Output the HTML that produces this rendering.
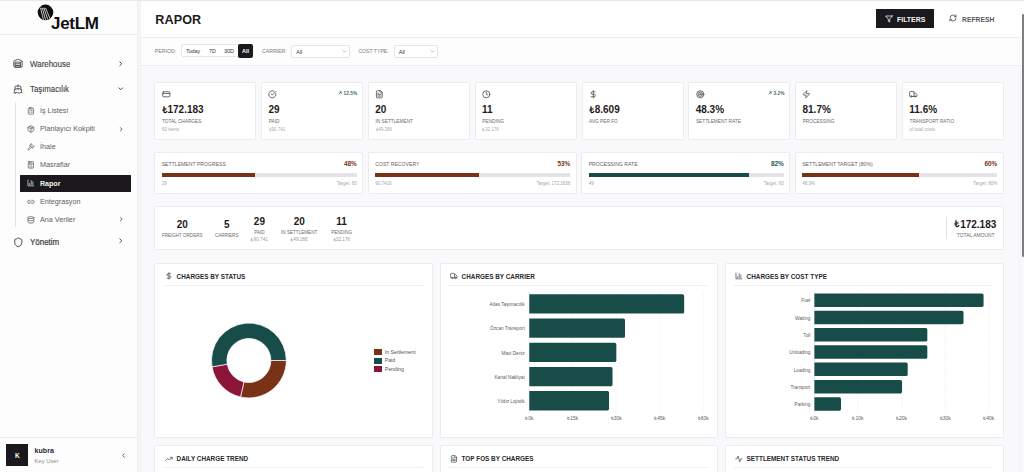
<!DOCTYPE html>
<html><head><meta charset="utf-8"><title>Rapor</title>
<style>
html,body{margin:0;padding:0;}
body{width:1024px;height:472px;overflow:hidden;position:relative;background:#f9f8fb;font-family:"Liberation Sans",sans-serif;}
.t{position:absolute;line-height:1;white-space:nowrap;}
.r{position:absolute;box-sizing:border-box;}
.i{position:absolute;overflow:visible;}
</style></head><body>
<div class="r" style="left:137.00px;top:0.00px;width:887.00px;height:37.00px;background:#ffffff;"></div>
<div class="r" style="left:137.00px;top:38.00px;width:884.00px;height:27.00px;background:#fefdfe;"></div>
<div class="r" style="left:137.00px;top:37.00px;width:884.00px;height:1.00px;background:#ecebef;"></div>
<div class="r" style="left:137.00px;top:65.00px;width:884.00px;height:1.00px;background:#ecebef;"></div>
<div class="r" style="left:0.00px;top:0.00px;width:137.50px;height:472.00px;background:#fdfdfd;"></div>
<div class="r" style="left:137.00px;top:0.00px;width:1.00px;height:472.00px;background:#efeef1;"></div>
<div class="r" style="left:138.00px;top:0.00px;width:2.50px;height:472.00px;background:#f4f3f6;"></div>
<div class="r" style="left:0.00px;top:34.20px;width:137.50px;height:1.00px;background:#ecebee;"></div>
<div class="r" style="left:0.00px;top:436.50px;width:137.50px;height:1.00px;background:#ecebee;"></div>
<div class="r" style="left:0.00px;top:0.00px;width:1024.00px;height:1.00px;background:#e9e9e7;"></div>
<div class="r" style="left:1020.00px;top:65.00px;width:1.00px;height:407.00px;background:#f3f2f5;"></div>
<div class="r" style="left:1022.30px;top:13.50px;width:2.20px;height:243.50px;background:#7e7e80;border-radius:1.2px;"></div>
<svg class="i" style="left:0;top:0;width:137px;height:34px" viewBox="0 0 137 34"><circle cx="45.5" cy="12.4" r="7.8" fill="#0d0d0d"/><path d="M52.2 16.4 L49.6 20.6 L55 21 Z" fill="#fdfdfd"/><path d="M40.6 8.3 L43.4 19.6 M42.4 8.3 L45.6 19.9 M44.1 8.4 L47.8 19.6 M45.8 8.6 L50 18.7" stroke="#fdfdfd" stroke-width="0.75"/><path d="M40.2 8.2 L46.2 8.4" stroke="#fdfdfd" stroke-width="0.6"/></svg>
<div class="t" style="top:14.51px;font-size:17.0px;font-weight:700;color:#111111;left:51.00px;letter-spacing:-0.3px;">JetLM</div>
<svg class="i" style="left:13.00px;top:58.00px;width:10.00px;height:10.00px" viewBox="0 0 24 24" fill="none" stroke="#4a4a4d" stroke-width="2.2" stroke-linecap="round" stroke-linejoin="round"><path d="M22 8.35V20a2 2 0 0 1-2 2H4a2 2 0 0 1-2-2V8.35A2 2 0 0 1 3.26 6.5l8-3.2a2 2 0 0 1 1.48 0l8 3.2A2 2 0 0 1 22 8.35Z"/><path d="M6 18h12"/><path d="M6 14h12"/><rect width="12" height="12" x="6" y="10"/></svg>
<div class="t" style="top:60.10px;font-size:8.5px;font-weight:400;color:#3e3e40;left:30.40px;transform-origin:0 0;transform:scaleX(0.935);-webkit-text-stroke:0.12px #3e3e40;">Warehouse</div>
<svg class="i" style="left:116.50px;top:59.50px;width:7.50px;height:7.50px" viewBox="0 0 24 24" fill="none" stroke="#474749" stroke-width="3.2" stroke-linecap="round" stroke-linejoin="round"><path d="m9 18 6-6-6-6"/></svg>
<svg class="i" style="left:13.00px;top:83.80px;width:10.00px;height:10.00px" viewBox="0 0 24 24" fill="none" stroke="#4a4a4d" stroke-width="2.2" stroke-linecap="round" stroke-linejoin="round"><path d="M12 10.189V14"/><path d="M12 2v3"/><path d="M19 13V7a2 2 0 0 0-2-2H7a2 2 0 0 0-2 2v6"/><path d="M19.38 20A11.6 11.6 0 0 0 21 14l-8.188-3.639a2 2 0 0 0-1.624 0L3 14a11.6 11.6 0 0 0 2.81 7.76"/><path d="M2 21c.6.5 1.2 1 2.5 1 2.5 0 2.5-2 5-2 1.3 0 1.9.5 2.5 1s1.2 1 2.5 1c2.5 0 2.5-2 5-2 1.3 0 1.9.5 2.5 1"/></svg>
<div class="t" style="top:85.17px;font-size:8.3px;font-weight:400;color:#3e3e40;left:30.40px;transform-origin:0 0;transform:scaleX(0.94);-webkit-text-stroke:0.12px #3e3e40;">Taşımacılık</div>
<svg class="i" style="left:116.50px;top:84.50px;width:7.50px;height:7.50px" viewBox="0 0 24 24" fill="none" stroke="#474749" stroke-width="3.2" stroke-linecap="round" stroke-linejoin="round"><path d="m6 9 6 6 6-6"/></svg>
<div class="r" style="left:15.00px;top:102.00px;width:1.00px;height:125.40px;background:#e3e2e6;"></div>
<svg class="i" style="left:27.30px;top:106.70px;width:7.80px;height:7.80px" viewBox="0 0 24 24" fill="none" stroke="#5a5a5d" stroke-width="2.2" stroke-linecap="round" stroke-linejoin="round"><rect width="8" height="4" x="8" y="2" rx="1" ry="1"/><path d="M16 4h2a2 2 0 0 1 2 2v14a2 2 0 0 1-2 2H6a2 2 0 0 1-2-2V6a2 2 0 0 1 2-2h2"/><path d="M12 11h4"/><path d="M12 16h4"/><path d="M8 11h.01"/><path d="M8 16h.01"/></svg>
<div class="t" style="top:107.37px;font-size:7.6px;font-weight:400;color:#5d5d60;left:39.50px;transform-origin:0 0;transform:scaleX(0.95);">İş Listesi</div>
<svg class="i" style="left:27.30px;top:124.70px;width:7.80px;height:7.80px" viewBox="0 0 24 24" fill="none" stroke="#5a5a5d" stroke-width="2.2" stroke-linecap="round" stroke-linejoin="round"><path d="M11 21.73a2 2 0 0 0 2 0l7-4A2 2 0 0 0 21 16V8a2 2 0 0 0-1-1.73l-7-4a2 2 0 0 0-2 0l-7 4A2 2 0 0 0 3 8v8a2 2 0 0 0 1 1.73z"/><path d="M12 22V12"/><path d="m3.3 7 7.703 4.734a2 2 0 0 0 1.994 0L20.7 7"/><path d="m7.5 4.27 9 5.15"/></svg>
<div class="t" style="top:125.37px;font-size:7.6px;font-weight:400;color:#5d5d60;left:39.50px;transform-origin:0 0;transform:scaleX(0.95);">Planlayıcı Kokpiti</div>
<svg class="i" style="left:117.80px;top:125.50px;width:6.50px;height:6.50px" viewBox="0 0 24 24" fill="none" stroke="#474749" stroke-width="3.2" stroke-linecap="round" stroke-linejoin="round"><path d="m9 18 6-6-6-6"/></svg>
<svg class="i" style="left:27.30px;top:142.70px;width:7.80px;height:7.80px" viewBox="0 0 24 24" fill="none" stroke="#5a5a5d" stroke-width="2.2" stroke-linecap="round" stroke-linejoin="round"><path d="m14.5 12.5-8 8a2.119 2.119 0 1 1-3-3l8-8"/><path d="m16 16 6-6"/><path d="m8 8 6-6"/><path d="m9 7 8 8"/><path d="m21 11-8-8"/></svg>
<div class="t" style="top:143.37px;font-size:7.6px;font-weight:400;color:#5d5d60;left:39.50px;transform-origin:0 0;transform:scaleX(0.95);">İhale</div>
<svg class="i" style="left:27.30px;top:160.80px;width:7.80px;height:7.80px" viewBox="0 0 24 24" fill="none" stroke="#5a5a5d" stroke-width="2.2" stroke-linecap="round" stroke-linejoin="round"><rect width="16" height="20" x="4" y="2" rx="2"/><rect width="8" height="6" x="8" y="6" rx="1"/><path d="M8 18h8"/></svg>
<div class="t" style="top:161.47px;font-size:7.6px;font-weight:400;color:#5d5d60;left:39.50px;transform-origin:0 0;transform:scaleX(0.95);">Masraflar</div>
<div class="r" style="left:20.00px;top:175.00px;width:111.00px;height:16.80px;background:#1b191d;border-radius:0.6px;"></div>
<svg class="i" style="left:27.20px;top:179.10px;width:7.80px;height:7.80px" viewBox="0 0 24 24" fill="none" stroke="#e8e8e8" stroke-width="2.2" stroke-linecap="round" stroke-linejoin="round"><path d="M3 3v18h18"/><path d="M18 17V9"/><path d="M13 17V5"/><path d="M8 17v-3"/></svg>
<div class="t" style="top:180.07px;font-size:7.6px;font-weight:700;color:#f4f4f4;left:39.80px;transform-origin:0 0;transform:scaleX(0.93);">Rapor</div>
<svg class="i" style="left:27.30px;top:197.50px;width:7.80px;height:7.80px" viewBox="0 0 24 24" fill="none" stroke="#5a5a5d" stroke-width="2.2" stroke-linecap="round" stroke-linejoin="round"><path d="M9 17H7A5 5 0 0 1 7 7h2"/><path d="M15 7h2a5 5 0 1 1 0 10h-2"/><line x1="8" x2="16" y1="12" y2="12"/></svg>
<div class="t" style="top:198.17px;font-size:7.6px;font-weight:400;color:#5d5d60;left:39.50px;transform-origin:0 0;transform:scaleX(0.95);">Entegrasyon</div>
<svg class="i" style="left:27.30px;top:215.60px;width:7.80px;height:7.80px" viewBox="0 0 24 24" fill="none" stroke="#5a5a5d" stroke-width="2.2" stroke-linecap="round" stroke-linejoin="round"><ellipse cx="12" cy="5" rx="9" ry="3"/><path d="M3 5V19A9 3 0 0 0 21 19V5"/><path d="M3 12A9 3 0 0 0 21 12"/></svg>
<div class="t" style="top:216.27px;font-size:7.6px;font-weight:400;color:#5d5d60;left:39.50px;transform-origin:0 0;transform:scaleX(0.95);">Ana Veriler</div>
<svg class="i" style="left:117.80px;top:216.40px;width:6.50px;height:6.50px" viewBox="0 0 24 24" fill="none" stroke="#474749" stroke-width="3.2" stroke-linecap="round" stroke-linejoin="round"><path d="m9 18 6-6-6-6"/></svg>
<svg class="i" style="left:12.80px;top:236.60px;width:10.60px;height:10.60px" viewBox="0 0 24 24" fill="none" stroke="#4a4a4d" stroke-width="2.2" stroke-linecap="round" stroke-linejoin="round"><path d="M20 13c0 5-3.5 7.5-7.66 8.95a1 1 0 0 1-.67-.01C7.5 20.5 4 18 4 13V6a1 1 0 0 1 1-1c2 0 4.5-1.2 6.24-2.72a1.17 1.17 0 0 1 1.52 0C14.51 3.81 17 5 19 5a1 1 0 0 1 1 1z"/></svg>
<div class="t" style="top:238.30px;font-size:8.5px;font-weight:400;color:#38383a;left:30.20px;transform-origin:0 0;transform:scaleX(0.935);-webkit-text-stroke:0.2px #38383a;">Yönetim</div>
<svg class="i" style="left:116.50px;top:237.30px;width:7.50px;height:7.50px" viewBox="0 0 24 24" fill="none" stroke="#474749" stroke-width="3.2" stroke-linecap="round" stroke-linejoin="round"><path d="m9 18 6-6-6-6"/></svg>
<div class="r" style="left:6.20px;top:444.00px;width:22.00px;height:21.50px;background:#1b191d;"></div>
<div class="t" style="top:452.80px;font-size:6.5px;font-weight:700;color:#ffffff;left:17.40px;transform-origin:0 0;transform:translateX(-50%) ;">K</div>
<div class="t" style="top:448.29px;font-size:7.1px;font-weight:700;color:#2a2a2c;left:34.60px;">kubra</div>
<div class="t" style="top:458.89px;font-size:5.8px;font-weight:400;color:#8a8a8d;left:34.60px;">Key User</div>
<svg class="i" style="left:120.20px;top:451.50px;width:7.00px;height:7.00px" viewBox="0 0 24 24" fill="none" stroke="#58585a" stroke-width="3.2" stroke-linecap="round" stroke-linejoin="round"><path d="m15 18-6-6 6-6"/></svg>
<div class="t" style="top:13.53px;font-size:12.6px;font-weight:700;color:#1d1b20;left:155.30px;letter-spacing:0.1px;">RAPOR</div>
<div class="r" style="left:876.20px;top:9.10px;width:57.50px;height:19.00px;background:#1b191d;"></div>
<svg class="i" style="left:885.00px;top:14.50px;width:8.00px;height:8.00px" viewBox="0 0 24 24" fill="none" stroke="#ffffff" stroke-width="2.3" stroke-linecap="round" stroke-linejoin="round"><polygon points="22 3 2 3 10 12.46 10 19 14 21 14 12.46 22 3"/></svg>
<div class="t" style="top:15.67px;font-size:7.6px;font-weight:700;color:#f6f6f6;left:896.50px;transform-origin:0 0;transform:scaleX(0.91);">FILTERS</div>
<svg class="i" style="left:949.00px;top:13.60px;width:8.00px;height:8.00px" viewBox="0 0 24 24" fill="none" stroke="#5a5a5d" stroke-width="2.7" stroke-linecap="round" stroke-linejoin="round"><path d="M3 12a9 9 0 0 1 9-9 9.75 9.75 0 0 1 6.74 2.74L21 8"/><path d="M21 3v5h-5"/><path d="M21 12a9 9 0 0 1-9 9 9.75 9.75 0 0 1-6.74-2.74L3 16"/><path d="M8 16H3v5"/></svg>
<div class="t" style="top:15.75px;font-size:7.5px;font-weight:700;color:#5a5a5d;left:961.80px;transform-origin:0 0;transform:scaleX(0.905);">REFRESH</div>
<div class="t" style="top:48.70px;font-size:5.2px;font-weight:400;color:#7a7a7d;left:154.80px;">PERIOD:</div>
<div class="r" style="left:181.20px;top:44.40px;width:71.60px;height:13.00px;background:#ffffff;box-shadow:inset 0 0 0 1px #e9e7ec;border-radius:2px;"></div>
<div class="t" style="top:48.76px;font-size:5.25px;font-weight:400;color:#333;left:186.00px;">Today</div>
<div class="t" style="top:48.71px;font-size:5.3px;font-weight:400;color:#333;left:209.00px;">7D</div>
<div class="t" style="top:48.59px;font-size:5.45px;font-weight:400;color:#333;left:224.00px;">30D</div>
<div class="r" style="left:238.20px;top:44.20px;width:14.60px;height:13.40px;background:#1b191d;border-radius:2px;"></div>
<div class="t" style="top:48.63px;font-size:5.4px;font-weight:700;color:#fff;left:245.50px;transform-origin:0 0;transform:translateX(-50%) ;">All</div>
<div class="t" style="top:48.72px;font-size:5.17px;font-weight:400;color:#7a7a7d;left:262.00px;">CARRIER:</div>
<div class="r" style="left:291.00px;top:44.80px;width:59.00px;height:13.20px;background:#ffffff;box-shadow:inset 0 0 0 1px #e7e5ea;border-radius:2px;"></div>
<div class="t" style="top:49.63px;font-size:5.4px;font-weight:400;color:#333;left:296.30px;">All</div>
<svg class="i" style="left:342.30px;top:48.80px;width:5.00px;height:5.00px" viewBox="0 0 24 24" fill="none" stroke="#777" stroke-width="2.6" stroke-linecap="round" stroke-linejoin="round"><path d="m6 9 6 6 6-6"/></svg>
<div class="t" style="top:48.76px;font-size:5.13px;font-weight:400;color:#7a7a7d;left:358.40px;">COST TYPE:</div>
<div class="r" style="left:393.50px;top:44.80px;width:44.50px;height:13.20px;background:#ffffff;box-shadow:inset 0 0 0 1px #e7e5ea;border-radius:2px;"></div>
<div class="t" style="top:49.63px;font-size:5.4px;font-weight:400;color:#333;left:398.80px;">All</div>
<svg class="i" style="left:429.80px;top:48.80px;width:5.00px;height:5.00px" viewBox="0 0 24 24" fill="none" stroke="#777" stroke-width="2.6" stroke-linecap="round" stroke-linejoin="round"><path d="m6 9 6 6 6-6"/></svg>
<div class="r" style="left:154.00px;top:82.40px;width:102.00px;height:57.20px;background:#ffffff;box-shadow:inset 0 0 0 1px #ecebef;border-radius:1.5px;"></div>
<svg class="i" style="left:161.60px;top:89.50px;width:8.60px;height:8.60px" viewBox="0 0 24 24" fill="none" stroke="#56565a" stroke-width="2.4" stroke-linecap="round" stroke-linejoin="round"><rect width="20" height="14" x="2" y="5" rx="2"/><line x1="2" x2="22" y1="10" y2="10"/></svg>
<div class="t" style="top:105.13px;font-size:10px;font-weight:700;color:#1d1b20;left:161.70px;"><svg style="display:inline-block;vertical-align:baseline;width:5.50px;height:7.40px;margin-right:0.30px;overflow:visible" viewBox="0 0 55 72"><path d="M20 2 V56 Q20 65 31 65 Q45 65 51 49" fill="none" stroke="#1d1b20" stroke-width="13" stroke-linecap="butt"/><path d="M3 34 L45 20 M3 48 L45 34" stroke="#1d1b20" stroke-width="8"/></svg>172.183</div>
<div class="t" style="top:120.28px;font-size:4.75px;font-weight:400;color:#6b6b6f;left:161.90px;">TOTAL CHARGES</div>
<div class="t" style="top:128.35px;font-size:4.55px;font-weight:400;color:#a9a9ad;left:161.90px;">60 items</div>
<div class="r" style="left:261.00px;top:82.40px;width:102.00px;height:57.20px;background:#ffffff;box-shadow:inset 0 0 0 1px #ecebef;border-radius:1.5px;"></div>
<svg class="i" style="left:268.40px;top:89.50px;width:8.60px;height:8.60px" viewBox="0 0 24 24" fill="none" stroke="#56565a" stroke-width="2.4" stroke-linecap="round" stroke-linejoin="round"><path d="M21.801 10A10 10 0 1 1 17 3.335"/><path d="m9 11 3 3L22 4"/></svg>
<div class="t" style="top:105.13px;font-size:10px;font-weight:700;color:#1d1b20;left:268.50px;">29</div>
<div class="t" style="top:120.28px;font-size:4.75px;font-weight:400;color:#6b6b6f;left:268.70px;">PAID</div>
<div class="t" style="top:128.35px;font-size:4.55px;font-weight:400;color:#a9a9ad;left:268.70px;"><svg style="display:inline-block;vertical-align:baseline;width:2.50px;height:3.37px;margin-right:0.14px;overflow:visible" viewBox="0 0 55 72"><path d="M20 2 V56 Q20 65 31 65 Q45 65 51 49" fill="none" stroke="#a9a9ad" stroke-width="13" stroke-linecap="butt"/><path d="M3 34 L45 20 M3 48 L45 34" stroke="#a9a9ad" stroke-width="8"/></svg>90.741</div>
<div class="t" style="top:90.94px;font-size:4.8px;font-weight:700;color:#3a7566;right:666.80px;"><svg style="display:inline-block;width:4px;height:4px;margin-right:1.6px;vertical-align:0px" viewBox="0 0 10 10"><path d="M2 8 L8 2 M3.5 2 H8 V6.5" fill="none" stroke="#2f6d5e" stroke-width="2"/></svg>12.5%</div>
<div class="r" style="left:368.00px;top:82.40px;width:102.00px;height:57.20px;background:#ffffff;box-shadow:inset 0 0 0 1px #ecebef;border-radius:1.5px;"></div>
<svg class="i" style="left:375.20px;top:89.50px;width:8.60px;height:8.60px" viewBox="0 0 24 24" fill="none" stroke="#56565a" stroke-width="2.4" stroke-linecap="round" stroke-linejoin="round"><path d="M15 2H6a2 2 0 0 0-2 2v16a2 2 0 0 0 2 2h12a2 2 0 0 0 2-2V7Z"/><path d="M14 2v4a2 2 0 0 0 2 2h4"/><path d="M10 9H8"/><path d="M16 13H8"/><path d="M16 17H8"/></svg>
<div class="t" style="top:105.13px;font-size:10px;font-weight:700;color:#1d1b20;left:375.30px;">20</div>
<div class="t" style="top:120.28px;font-size:4.75px;font-weight:400;color:#6b6b6f;left:375.50px;">IN SETTLEMENT</div>
<div class="t" style="top:128.35px;font-size:4.55px;font-weight:400;color:#a9a9ad;left:375.50px;"><svg style="display:inline-block;vertical-align:baseline;width:2.50px;height:3.37px;margin-right:0.14px;overflow:visible" viewBox="0 0 55 72"><path d="M20 2 V56 Q20 65 31 65 Q45 65 51 49" fill="none" stroke="#a9a9ad" stroke-width="13" stroke-linecap="butt"/><path d="M3 34 L45 20 M3 48 L45 34" stroke="#a9a9ad" stroke-width="8"/></svg>49.266</div>
<div class="r" style="left:475.00px;top:82.40px;width:102.00px;height:57.20px;background:#ffffff;box-shadow:inset 0 0 0 1px #ecebef;border-radius:1.5px;"></div>
<svg class="i" style="left:482.00px;top:89.50px;width:8.60px;height:8.60px" viewBox="0 0 24 24" fill="none" stroke="#56565a" stroke-width="2.4" stroke-linecap="round" stroke-linejoin="round"><circle cx="12" cy="12" r="10"/><polyline points="12 6 12 12 16 14"/></svg>
<div class="t" style="top:105.13px;font-size:10px;font-weight:700;color:#1d1b20;left:482.10px;">11</div>
<div class="t" style="top:120.28px;font-size:4.75px;font-weight:400;color:#6b6b6f;left:482.30px;">PENDING</div>
<div class="t" style="top:128.35px;font-size:4.55px;font-weight:400;color:#a9a9ad;left:482.30px;"><svg style="display:inline-block;vertical-align:baseline;width:2.50px;height:3.37px;margin-right:0.14px;overflow:visible" viewBox="0 0 55 72"><path d="M20 2 V56 Q20 65 31 65 Q45 65 51 49" fill="none" stroke="#a9a9ad" stroke-width="13" stroke-linecap="butt"/><path d="M3 34 L45 20 M3 48 L45 34" stroke="#a9a9ad" stroke-width="8"/></svg>32.176</div>
<div class="r" style="left:582.00px;top:82.40px;width:102.00px;height:57.20px;background:#ffffff;box-shadow:inset 0 0 0 1px #ecebef;border-radius:1.5px;"></div>
<svg class="i" style="left:588.80px;top:89.50px;width:8.60px;height:8.60px" viewBox="0 0 24 24" fill="none" stroke="#56565a" stroke-width="2.4" stroke-linecap="round" stroke-linejoin="round"><line x1="12" x2="12" y1="2" y2="22"/><path d="M17 5H9.5a3.5 3.5 0 0 0 0 7h5a3.5 3.5 0 0 1 0 7H6"/></svg>
<div class="t" style="top:105.13px;font-size:10px;font-weight:700;color:#1d1b20;left:588.90px;"><svg style="display:inline-block;vertical-align:baseline;width:5.50px;height:7.40px;margin-right:0.30px;overflow:visible" viewBox="0 0 55 72"><path d="M20 2 V56 Q20 65 31 65 Q45 65 51 49" fill="none" stroke="#1d1b20" stroke-width="13" stroke-linecap="butt"/><path d="M3 34 L45 20 M3 48 L45 34" stroke="#1d1b20" stroke-width="8"/></svg>8.609</div>
<div class="t" style="top:120.28px;font-size:4.75px;font-weight:400;color:#6b6b6f;left:589.10px;">AVG PER FO</div>
<div class="r" style="left:688.00px;top:82.40px;width:102.00px;height:57.20px;background:#ffffff;box-shadow:inset 0 0 0 1px #ecebef;border-radius:1.5px;"></div>
<svg class="i" style="left:695.60px;top:89.50px;width:8.60px;height:8.60px" viewBox="0 0 24 24" fill="none" stroke="#56565a" stroke-width="2.4" stroke-linecap="round" stroke-linejoin="round"><circle cx="12" cy="12" r="10"/><circle cx="12" cy="12" r="6"/><circle cx="12" cy="12" r="2"/></svg>
<div class="t" style="top:105.13px;font-size:10px;font-weight:700;color:#1d1b20;left:695.70px;">48.3%</div>
<div class="t" style="top:120.28px;font-size:4.75px;font-weight:400;color:#6b6b6f;left:695.90px;">SETTLEMENT RATE</div>
<div class="t" style="top:90.94px;font-size:4.8px;font-weight:700;color:#3a7566;right:239.60px;"><svg style="display:inline-block;width:4px;height:4px;margin-right:1.6px;vertical-align:0px" viewBox="0 0 10 10"><path d="M2 8 L8 2 M3.5 2 H8 V6.5" fill="none" stroke="#2f6d5e" stroke-width="2"/></svg>3.2%</div>
<div class="r" style="left:795.00px;top:82.40px;width:102.00px;height:57.20px;background:#ffffff;box-shadow:inset 0 0 0 1px #ecebef;border-radius:1.5px;"></div>
<svg class="i" style="left:802.40px;top:89.50px;width:8.60px;height:8.60px" viewBox="0 0 24 24" fill="none" stroke="#56565a" stroke-width="2.4" stroke-linecap="round" stroke-linejoin="round"><path d="M4 14a1 1 0 0 1-.78-1.63l9.9-10.2a.5.5 0 0 1 .86.46l-1.92 6.02A1 1 0 0 0 13 10h7a1 1 0 0 1 .78 1.63l-9.9 10.2a.5.5 0 0 1-.86-.46l1.92-6.02A1 1 0 0 0 11 14z"/></svg>
<div class="t" style="top:105.13px;font-size:10px;font-weight:700;color:#1d1b20;left:802.50px;">81.7%</div>
<div class="t" style="top:120.28px;font-size:4.75px;font-weight:400;color:#6b6b6f;left:802.70px;">PROCESSING</div>
<div class="r" style="left:902.00px;top:82.40px;width:102.00px;height:57.20px;background:#ffffff;box-shadow:inset 0 0 0 1px #ecebef;border-radius:1.5px;"></div>
<svg class="i" style="left:909.20px;top:89.50px;width:8.60px;height:8.60px" viewBox="0 0 24 24" fill="none" stroke="#56565a" stroke-width="2.4" stroke-linecap="round" stroke-linejoin="round"><path d="M14 18V6a2 2 0 0 0-2-2H4a2 2 0 0 0-2 2v11a1 1 0 0 0 1 1h2"/><path d="M15 18H9"/><path d="M19 18h2a1 1 0 0 0 1-1v-3.65a1 1 0 0 0-.22-.624l-3.48-4.35A1 1 0 0 0 17.52 8H14"/><circle cx="17" cy="18" r="2"/><circle cx="7" cy="18" r="2"/></svg>
<div class="t" style="top:105.13px;font-size:10px;font-weight:700;color:#1d1b20;left:909.30px;">11.6%</div>
<div class="t" style="top:120.28px;font-size:4.75px;font-weight:400;color:#6b6b6f;left:909.50px;">TRANSPORT RATIO</div>
<div class="t" style="top:128.35px;font-size:4.55px;font-weight:400;color:#a9a9ad;left:909.50px;">of total costs</div>
<div class="r" style="left:154.00px;top:152.40px;width:209.00px;height:41.20px;background:#ffffff;box-shadow:inset 0 0 0 1px #ecebef;border-radius:1.5px;"></div>
<div class="t" style="top:162.15px;font-size:5.14px;font-weight:400;color:#5f5f63;left:161.70px;">SETTLEMENT PROGRESS</div>
<div class="t" style="top:161.28px;font-size:6.4px;font-weight:700;color:#7a3216;right:667.20px;">48%</div>
<div class="r" style="left:161.70px;top:172.50px;width:195.10px;height:4.70px;background:#e5e3e8;"></div>
<div class="r" style="left:161.70px;top:172.50px;width:93.65px;height:4.70px;background:#7a3216;"></div>
<div class="t" style="top:181.89px;font-size:4.5px;font-weight:400;color:#a5a5a9;left:161.70px;">29</div>
<div class="t" style="top:181.89px;font-size:4.5px;font-weight:400;color:#a5a5a9;right:667.20px;">Target: 60</div>
<div class="r" style="left:368.00px;top:152.40px;width:209.00px;height:41.20px;background:#ffffff;box-shadow:inset 0 0 0 1px #ecebef;border-radius:1.5px;"></div>
<div class="t" style="top:162.15px;font-size:5.14px;font-weight:400;color:#5f5f63;left:375.20px;">COST RECOVERY</div>
<div class="t" style="top:161.28px;font-size:6.4px;font-weight:700;color:#7a3216;right:453.70px;">53%</div>
<div class="r" style="left:375.20px;top:172.50px;width:195.10px;height:4.70px;background:#e5e3e8;"></div>
<div class="r" style="left:375.20px;top:172.50px;width:103.40px;height:4.70px;background:#7a3216;"></div>
<div class="t" style="top:181.89px;font-size:4.5px;font-weight:400;color:#a5a5a9;left:375.20px;">90.7416</div>
<div class="t" style="top:181.89px;font-size:4.5px;font-weight:400;color:#a5a5a9;right:453.70px;">Target: 172.1836</div>
<div class="r" style="left:581.00px;top:152.40px;width:209.00px;height:41.20px;background:#ffffff;box-shadow:inset 0 0 0 1px #ecebef;border-radius:1.5px;"></div>
<div class="t" style="top:162.15px;font-size:5.14px;font-weight:400;color:#5f5f63;left:588.70px;">PROCESSING RATE</div>
<div class="t" style="top:161.28px;font-size:6.4px;font-weight:700;color:#1d5a55;right:240.20px;">82%</div>
<div class="r" style="left:588.70px;top:172.50px;width:195.10px;height:4.70px;background:#e5e3e8;"></div>
<div class="r" style="left:588.70px;top:172.50px;width:159.98px;height:4.70px;background:#174c49;"></div>
<div class="t" style="top:181.89px;font-size:4.5px;font-weight:400;color:#a5a5a9;left:588.70px;">49</div>
<div class="t" style="top:181.89px;font-size:4.5px;font-weight:400;color:#a5a5a9;right:240.20px;">Target: 60</div>
<div class="r" style="left:795.00px;top:152.40px;width:209.00px;height:41.20px;background:#ffffff;box-shadow:inset 0 0 0 1px #ecebef;border-radius:1.5px;"></div>
<div class="t" style="top:162.15px;font-size:5.14px;font-weight:400;color:#5f5f63;left:802.20px;">SETTLEMENT TARGET (80%)</div>
<div class="t" style="top:161.28px;font-size:6.4px;font-weight:700;color:#7a3216;right:26.70px;">60%</div>
<div class="r" style="left:802.20px;top:172.50px;width:195.10px;height:4.70px;background:#e5e3e8;"></div>
<div class="r" style="left:802.20px;top:172.50px;width:117.06px;height:4.70px;background:#7a3216;"></div>
<div class="t" style="top:181.89px;font-size:4.5px;font-weight:400;color:#a5a5a9;left:802.20px;">48.3%</div>
<div class="t" style="top:181.89px;font-size:4.5px;font-weight:400;color:#a5a5a9;right:26.70px;">Target: 80%</div>
<div class="r" style="left:154.00px;top:206.00px;width:850.00px;height:44.00px;background:#ffffff;box-shadow:inset 0 0 0 1px #ecebef;border-radius:1.5px;"></div>
<div class="t" style="top:220.13px;font-size:10px;font-weight:700;color:#1d1b20;left:182.20px;transform-origin:0 0;transform:translateX(-50%) ;">20</div>
<div class="t" style="top:233.55px;font-size:4.55px;font-weight:400;color:#6b6b6f;left:182.20px;transform-origin:0 0;transform:translateX(-50%) ;">FREIGHT ORDERS</div>
<div class="t" style="top:220.13px;font-size:10px;font-weight:700;color:#1d1b20;left:226.70px;transform-origin:0 0;transform:translateX(-50%) ;">5</div>
<div class="t" style="top:233.55px;font-size:4.55px;font-weight:400;color:#6b6b6f;left:226.70px;transform-origin:0 0;transform:translateX(-50%) ;">CARRIERS</div>
<div class="t" style="top:217.13px;font-size:10px;font-weight:700;color:#1d1b20;left:259.40px;transform-origin:0 0;transform:translateX(-50%) ;">29</div>
<div class="t" style="top:230.71px;font-size:4.6px;font-weight:400;color:#6b6b6f;left:259.40px;transform-origin:0 0;transform:translateX(-50%) ;">PAID</div>
<div class="t" style="top:237.62px;font-size:4.7px;font-weight:400;color:#9a9a9e;left:259.40px;transform-origin:0 0;transform:translateX(-50%) ;"><svg style="display:inline-block;vertical-align:baseline;width:2.59px;height:3.48px;margin-right:0.14px;overflow:visible" viewBox="0 0 55 72"><path d="M20 2 V56 Q20 65 31 65 Q45 65 51 49" fill="none" stroke="#9a9a9e" stroke-width="13" stroke-linecap="butt"/><path d="M3 34 L45 20 M3 48 L45 34" stroke="#9a9a9e" stroke-width="8"/></svg>90.741</div>
<div class="t" style="top:217.13px;font-size:10px;font-weight:700;color:#1d1b20;left:299.20px;transform-origin:0 0;transform:translateX(-50%) ;">20</div>
<div class="t" style="top:230.71px;font-size:4.6px;font-weight:400;color:#6b6b6f;left:299.20px;transform-origin:0 0;transform:translateX(-50%) ;">IN SETTLEMENT</div>
<div class="t" style="top:237.62px;font-size:4.7px;font-weight:400;color:#9a9a9e;left:299.20px;transform-origin:0 0;transform:translateX(-50%) ;"><svg style="display:inline-block;vertical-align:baseline;width:2.59px;height:3.48px;margin-right:0.14px;overflow:visible" viewBox="0 0 55 72"><path d="M20 2 V56 Q20 65 31 65 Q45 65 51 49" fill="none" stroke="#9a9a9e" stroke-width="13" stroke-linecap="butt"/><path d="M3 34 L45 20 M3 48 L45 34" stroke="#9a9a9e" stroke-width="8"/></svg>49.266</div>
<div class="t" style="top:217.13px;font-size:10px;font-weight:700;color:#1d1b20;left:341.60px;transform-origin:0 0;transform:translateX(-50%) ;">11</div>
<div class="t" style="top:230.71px;font-size:4.6px;font-weight:400;color:#6b6b6f;left:341.60px;transform-origin:0 0;transform:translateX(-50%) ;">PENDING</div>
<div class="t" style="top:237.62px;font-size:4.7px;font-weight:400;color:#9a9a9e;left:341.60px;transform-origin:0 0;transform:translateX(-50%) ;"><svg style="display:inline-block;vertical-align:baseline;width:2.59px;height:3.48px;margin-right:0.14px;overflow:visible" viewBox="0 0 55 72"><path d="M20 2 V56 Q20 65 31 65 Q45 65 51 49" fill="none" stroke="#9a9a9e" stroke-width="13" stroke-linecap="butt"/><path d="M3 34 L45 20 M3 48 L45 34" stroke="#9a9a9e" stroke-width="8"/></svg>32.176</div>
<div class="r" style="left:946.30px;top:217.20px;width:1.00px;height:21.80px;background:#e3e2e6;"></div>
<div class="t" style="top:219.84px;font-size:10px;font-weight:700;color:#1d1b20;right:27.70px;"><svg style="display:inline-block;vertical-align:baseline;width:5.50px;height:7.40px;margin-right:0.30px;overflow:visible" viewBox="0 0 55 72"><path d="M20 2 V56 Q20 65 31 65 Q45 65 51 49" fill="none" stroke="#1d1b20" stroke-width="13" stroke-linecap="butt"/><path d="M3 34 L45 20 M3 48 L45 34" stroke="#1d1b20" stroke-width="8"/></svg>172.183</div>
<div class="t" style="top:234.01px;font-size:4.95px;font-weight:400;color:#6b6b6f;right:29.40px;">TOTAL AMOUNT</div>
<div class="r" style="left:154.00px;top:263.00px;width:279.00px;height:175.00px;background:#ffffff;box-shadow:inset 0 0 0 1px #ecebef;border-radius:1.5px;"></div>
<svg class="i" style="left:164.50px;top:272.30px;width:7.80px;height:7.80px" viewBox="0 0 24 24" fill="none" stroke="#56565a" stroke-width="2.4" stroke-linecap="round" stroke-linejoin="round"><line x1="12" x2="12" y1="2" y2="22"/><path d="M17 5H9.5a3.5 3.5 0 0 0 0 7h5a3.5 3.5 0 0 1 0 7H6"/></svg>
<div class="t" style="top:273.70px;font-size:6.38px;font-weight:700;color:#2b2a2e;left:176.60px;">CHARGES BY STATUS</div>
<div class="r" style="left:164.30px;top:284.80px;width:258.70px;height:1.00px;background:#efeef1;"></div>
<div class="r" style="left:440.00px;top:263.00px;width:278.00px;height:175.00px;background:#ffffff;box-shadow:inset 0 0 0 1px #ecebef;border-radius:1.5px;"></div>
<svg class="i" style="left:449.50px;top:272.30px;width:7.80px;height:7.80px" viewBox="0 0 24 24" fill="none" stroke="#56565a" stroke-width="2.4" stroke-linecap="round" stroke-linejoin="round"><path d="M14 18V6a2 2 0 0 0-2-2H4a2 2 0 0 0-2 2v11a1 1 0 0 0 1 1h2"/><path d="M15 18H9"/><path d="M19 18h2a1 1 0 0 0 1-1v-3.65a1 1 0 0 0-.22-.624l-3.48-4.35A1 1 0 0 0 17.52 8H14"/><circle cx="17" cy="18" r="2"/><circle cx="7" cy="18" r="2"/></svg>
<div class="t" style="top:273.70px;font-size:6.38px;font-weight:700;color:#2b2a2e;left:461.60px;">CHARGES BY CARRIER</div>
<div class="r" style="left:449.30px;top:284.80px;width:258.70px;height:1.00px;background:#efeef1;"></div>
<div class="r" style="left:725.00px;top:263.00px;width:279.00px;height:175.00px;background:#ffffff;box-shadow:inset 0 0 0 1px #ecebef;border-radius:1.5px;"></div>
<svg class="i" style="left:734.50px;top:272.30px;width:7.80px;height:7.80px" viewBox="0 0 24 24" fill="none" stroke="#56565a" stroke-width="2.4" stroke-linecap="round" stroke-linejoin="round"><path d="M3 3v18h18"/><path d="M18 17V9"/><path d="M13 17V5"/><path d="M8 17v-3"/></svg>
<div class="t" style="top:273.70px;font-size:6.38px;font-weight:700;color:#2b2a2e;left:746.60px;">CHARGES BY COST TYPE</div>
<div class="r" style="left:734.30px;top:284.80px;width:258.70px;height:1.00px;background:#efeef1;"></div>
<div class="r" style="left:154.00px;top:445.00px;width:279.00px;height:35.00px;background:#ffffff;box-shadow:inset 0 0 0 1px #ecebef;border-radius:1.5px;"></div>
<svg class="i" style="left:164.50px;top:454.70px;width:7.80px;height:7.80px" viewBox="0 0 24 24" fill="none" stroke="#56565a" stroke-width="2.4" stroke-linecap="round" stroke-linejoin="round"><polyline points="22 7 13.5 15.5 8.5 10.5 2 17"/><polyline points="16 7 22 7 22 13"/></svg>
<div class="t" style="top:456.10px;font-size:6.38px;font-weight:700;color:#2b2a2e;left:176.60px;">DAILY CHARGE TREND</div>
<div class="r" style="left:164.30px;top:467.00px;width:258.70px;height:1.00px;background:#efeef1;"></div>
<div class="r" style="left:440.00px;top:445.00px;width:278.00px;height:35.00px;background:#ffffff;box-shadow:inset 0 0 0 1px #ecebef;border-radius:1.5px;"></div>
<svg class="i" style="left:449.50px;top:454.70px;width:7.80px;height:7.80px" viewBox="0 0 24 24" fill="none" stroke="#56565a" stroke-width="2.4" stroke-linecap="round" stroke-linejoin="round"><path d="M15 2H6a2 2 0 0 0-2 2v16a2 2 0 0 0 2 2h12a2 2 0 0 0 2-2V7Z"/><path d="M14 2v4a2 2 0 0 0 2 2h4"/><path d="M10 9H8"/><path d="M16 13H8"/><path d="M16 17H8"/></svg>
<div class="t" style="top:456.10px;font-size:6.38px;font-weight:700;color:#2b2a2e;left:461.60px;">TOP FOS BY CHARGES</div>
<div class="r" style="left:449.30px;top:467.00px;width:258.70px;height:1.00px;background:#efeef1;"></div>
<div class="r" style="left:725.00px;top:445.00px;width:279.00px;height:35.00px;background:#ffffff;box-shadow:inset 0 0 0 1px #ecebef;border-radius:1.5px;"></div>
<svg class="i" style="left:734.50px;top:454.70px;width:7.80px;height:7.80px" viewBox="0 0 24 24" fill="none" stroke="#56565a" stroke-width="2.4" stroke-linecap="round" stroke-linejoin="round"><path d="M22 12h-4l-3 9L9 3l-3 9H2"/></svg>
<div class="t" style="top:456.10px;font-size:6.38px;font-weight:700;color:#2b2a2e;left:746.60px;">SETTLEMENT STATUS TREND</div>
<div class="r" style="left:734.30px;top:467.00px;width:258.70px;height:1.00px;background:#efeef1;"></div>
<svg class="i" style="left:0;top:0;width:1024px;height:472px" viewBox="0 0 1024 472"><path d="M286.30 360.50 A37.4 37.4 0 0 1 240.48 396.94 L243.95 381.94 A22.0 22.0 0 0 0 270.90 360.50 Z" fill="#7a3216" stroke="#fff" stroke-width="0.7"/><path d="M240.48 396.94 A37.4 37.4 0 0 1 212.04 366.82 L227.22 364.21 A22.0 22.0 0 0 0 243.95 381.94 Z" fill="#8a1538" stroke="#fff" stroke-width="0.7"/><path d="M212.04 366.82 A37.4 37.4 0 1 1 286.30 360.50 L270.90 360.50 A22.0 22.0 0 1 0 227.22 364.21 Z" fill="#174c49" stroke="#fff" stroke-width="0.7"/></svg>
<div class="r" style="left:374.30px;top:349.30px;width:8.10px;height:6.00px;background:#7a3216;"></div>
<div class="t" style="top:349.95px;font-size:5.26px;font-weight:400;color:#555558;left:384.70px;">In Settlement</div>
<div class="r" style="left:374.30px;top:357.80px;width:8.10px;height:6.00px;background:#174c49;"></div>
<div class="t" style="top:358.45px;font-size:5.26px;font-weight:400;color:#555558;left:384.70px;">Paid</div>
<div class="r" style="left:374.30px;top:366.30px;width:8.10px;height:6.00px;background:#8a1538;"></div>
<div class="t" style="top:366.95px;font-size:5.26px;font-weight:400;color:#555558;left:384.70px;">Pending</div>
<svg class="i" style="left:0;top:0;width:1024px;height:472px" viewBox="0 0 1024 472"><line x1="572.80" x2="572.80" y1="291.85" y2="412.85" stroke="#e6e5ea" stroke-width="0.6" stroke-dasharray="1.6 1.6"/><line x1="616.30" x2="616.30" y1="291.85" y2="412.85" stroke="#e6e5ea" stroke-width="0.6" stroke-dasharray="1.6 1.6"/><line x1="659.80" x2="659.80" y1="291.85" y2="412.85" stroke="#e6e5ea" stroke-width="0.6" stroke-dasharray="1.6 1.6"/><line x1="703.30" x2="703.30" y1="291.85" y2="412.85" stroke="#e6e5ea" stroke-width="0.6" stroke-dasharray="1.6 1.6"/><line x1="529.30" x2="529.30" y1="291.85" y2="412.85" stroke="#e2e1e6" stroke-width="0.6"/><path d="M529.30 294.30 H682.56 Q684.16 294.30 684.16 295.90 V312.00 Q684.16 313.60 682.56 313.60 H529.30 Z" fill="#174c49"/><path d="M529.30 318.50 H623.40 Q625.00 318.50 625.00 320.10 V336.20 Q625.00 337.80 623.40 337.80 H529.30 Z" fill="#174c49"/><path d="M529.30 342.70 H614.70 Q616.30 342.70 616.30 344.30 V360.40 Q616.30 362.00 614.70 362.00 H529.30 Z" fill="#174c49"/><path d="M529.30 366.90 H610.93 Q612.53 366.90 612.53 368.50 V384.60 Q612.53 386.20 610.93 386.20 H529.30 Z" fill="#174c49"/><path d="M529.30 391.10 H607.45 Q609.05 391.10 609.05 392.70 V408.80 Q609.05 410.40 607.45 410.40 H529.30 Z" fill="#174c49"/></svg>
<div class="t" style="top:303.27px;font-size:4.7px;font-weight:400;color:#5a5a5e;right:499.30px;">Atlas Taşımacılık</div>
<div class="t" style="top:327.47px;font-size:4.7px;font-weight:400;color:#5a5a5e;right:499.30px;">Özcan Transport</div>
<div class="t" style="top:351.67px;font-size:4.7px;font-weight:400;color:#5a5a5e;right:499.30px;">Mavi Deniz</div>
<div class="t" style="top:375.87px;font-size:4.7px;font-weight:400;color:#5a5a5e;right:499.30px;">Kartal Nakliyat</div>
<div class="t" style="top:400.07px;font-size:4.7px;font-weight:400;color:#5a5a5e;right:499.30px;">Yıldız Lojistik</div>
<div class="t" style="top:416.07px;font-size:5.0px;font-weight:400;color:#606064;left:529.30px;transform-origin:0 0;transform:translateX(-50%) ;">₺0k</div>
<div class="t" style="top:416.07px;font-size:5.0px;font-weight:400;color:#606064;left:572.80px;transform-origin:0 0;transform:translateX(-50%) ;">₺15k</div>
<div class="t" style="top:416.07px;font-size:5.0px;font-weight:400;color:#606064;left:616.30px;transform-origin:0 0;transform:translateX(-50%) ;">₺30k</div>
<div class="t" style="top:416.07px;font-size:5.0px;font-weight:400;color:#606064;left:659.80px;transform-origin:0 0;transform:translateX(-50%) ;">₺45k</div>
<div class="t" style="top:416.07px;font-size:5.0px;font-weight:400;color:#606064;left:703.30px;transform-origin:0 0;transform:translateX(-50%) ;">₺60k</div>
<svg class="i" style="left:0;top:0;width:1024px;height:472px" viewBox="0 0 1024 472"><line x1="858.00" x2="858.00" y1="291.50" y2="412.60" stroke="#e6e5ea" stroke-width="0.6" stroke-dasharray="1.6 1.6"/><line x1="901.60" x2="901.60" y1="291.50" y2="412.60" stroke="#e6e5ea" stroke-width="0.6" stroke-dasharray="1.6 1.6"/><line x1="945.20" x2="945.20" y1="291.50" y2="412.60" stroke="#e6e5ea" stroke-width="0.6" stroke-dasharray="1.6 1.6"/><line x1="988.80" x2="988.80" y1="291.50" y2="412.60" stroke="#e6e5ea" stroke-width="0.6" stroke-dasharray="1.6 1.6"/><line x1="814.40" x2="814.40" y1="291.50" y2="412.60" stroke="#e2e1e6" stroke-width="0.6"/><path d="M814.40 293.40 H981.97 Q983.57 293.40 983.57 295.00 V305.30 Q983.57 306.90 981.97 306.90 H814.40 Z" fill="#174c49"/><path d="M814.40 310.70 H961.91 Q963.51 310.70 963.51 312.30 V322.60 Q963.51 324.20 961.91 324.20 H814.40 Z" fill="#174c49"/><path d="M814.40 328.00 H925.72 Q927.32 328.00 927.32 329.60 V339.90 Q927.32 341.50 925.72 341.50 H814.40 Z" fill="#174c49"/><path d="M814.40 345.30 H925.72 Q927.32 345.30 927.32 346.90 V357.20 Q927.32 358.80 925.72 358.80 H814.40 Z" fill="#174c49"/><path d="M814.40 362.60 H906.10 Q907.70 362.60 907.70 364.20 V374.50 Q907.70 376.10 906.10 376.10 H814.40 Z" fill="#174c49"/><path d="M814.40 379.90 H900.44 Q902.04 379.90 902.04 381.50 V391.80 Q902.04 393.40 900.44 393.40 H814.40 Z" fill="#174c49"/><path d="M814.40 397.20 H839.40 Q841.00 397.20 841.00 398.80 V409.10 Q841.00 410.70 839.40 410.70 H814.40 Z" fill="#174c49"/></svg>
<div class="t" style="top:299.47px;font-size:4.7px;font-weight:400;color:#5a5a5e;right:213.60px;">Fuel</div>
<div class="t" style="top:316.77px;font-size:4.7px;font-weight:400;color:#5a5a5e;right:213.60px;">Waiting</div>
<div class="t" style="top:334.07px;font-size:4.7px;font-weight:400;color:#5a5a5e;right:213.60px;">Toll</div>
<div class="t" style="top:351.37px;font-size:4.7px;font-weight:400;color:#5a5a5e;right:213.60px;">Unloading</div>
<div class="t" style="top:368.67px;font-size:4.7px;font-weight:400;color:#5a5a5e;right:213.60px;">Loading</div>
<div class="t" style="top:385.97px;font-size:4.7px;font-weight:400;color:#5a5a5e;right:213.60px;">Transport</div>
<div class="t" style="top:403.27px;font-size:4.7px;font-weight:400;color:#5a5a5e;right:213.60px;">Parking</div>
<div class="t" style="top:416.07px;font-size:5.0px;font-weight:400;color:#606064;left:814.40px;transform-origin:0 0;transform:translateX(-50%) ;">₺0k</div>
<div class="t" style="top:416.07px;font-size:5.0px;font-weight:400;color:#606064;left:858.00px;transform-origin:0 0;transform:translateX(-50%) ;">₺10k</div>
<div class="t" style="top:416.07px;font-size:5.0px;font-weight:400;color:#606064;left:901.60px;transform-origin:0 0;transform:translateX(-50%) ;">₺20k</div>
<div class="t" style="top:416.07px;font-size:5.0px;font-weight:400;color:#606064;left:945.20px;transform-origin:0 0;transform:translateX(-50%) ;">₺30k</div>
<div class="t" style="top:416.07px;font-size:5.0px;font-weight:400;color:#606064;left:988.80px;transform-origin:0 0;transform:translateX(-50%) ;">₺40k</div>
</body></html>
